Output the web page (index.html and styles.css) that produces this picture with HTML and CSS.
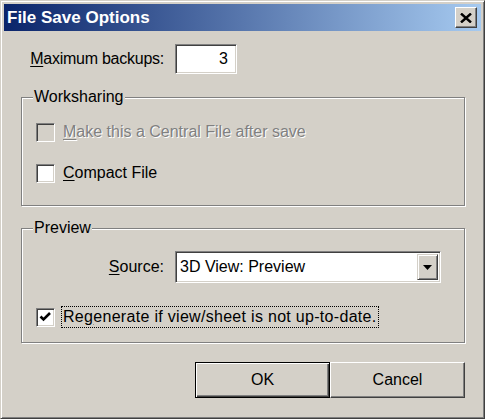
FILE: index.html
```html
<!DOCTYPE html>
<html lang="en">
<head>
  <meta charset="UTF-8">
  <title>File Save Options</title>
  <link rel="stylesheet" href="styles.css">
</head>
<body>

  <div class="window">
    <div class="titlebar">
      <span class="title">File Save Options</span>
      <button class="close" aria-label="Close">
        <svg width="12" height="10" viewBox="0 0 12 10">
          <path d="M1 0.5 L11 9.5 M11 0.5 L1 9.5" stroke="#000" stroke-width="2.4" fill="none"/>
        </svg>
      </button>
    </div>

    <div class="content">
      <div class="row">
        <label class="caption wide"><u>M</u>aximum backups:</label>
        <div class="field num">3</div>
      </div>

      <fieldset class="group work">
        <legend>Worksharing</legend>
        <div class="check disabled">
          <span class="box"></span>
          <span class="text"><u>M</u>ake this a Central File after save</span>
        </div>
        <div class="check">
          <span class="box"></span>
          <span class="text"><u>C</u>ompact File</span>
        </div>
      </fieldset>

      <fieldset class="group preview">
        <legend>Preview</legend>
        <div class="row">
          <label class="caption narrow"><u>S</u>ource:</label>
          <div class="combo">
            <span class="value">3D View: Preview</span>
            <span class="drop">
              <svg width="9" height="5" viewBox="0 0 9 5"><path d="M0 0 H9 L4.5 5 Z" fill="#000"/></svg>
            </span>
          </div>
        </div>
        <div class="check regen">
          <span class="box">
            <svg width="15" height="15" viewBox="0 0 15 15">
              <path d="M2.5 6.5 L5.5 9.5 L12 3" stroke="#000" stroke-width="2.6" fill="none"/>
            </svg>
          </span>
          <span class="text focus">Re<u>g</u>enerate if view/sheet is not up-to-date.</span>
        </div>
      </fieldset>

      <div class="actions">
        <button class="btn default">OK</button>
        <button class="btn">Cancel</button>
      </div>
    </div>
  </div>

</body>
</html>
```

FILE: styles.css
```css
/* Basic Reset */
* {
  margin: 0;
  padding: 0;
  box-sizing: border-box;
}

body {
  font-family: 'Liberation Sans', Arial, sans-serif;
  font-size: 16px;
  line-height: 18px;
  color: #000;
  background: #d4d0c8;
}

u {
  text-decoration: underline;
  text-underline-offset: 2px;
}

/* window frame */
.window {
  width: 485px;
  height: 419px;
  background: #d4d0c8;
  border: 1px solid;
  border-color: #d4d0c8 #404040 #404040 #d4d0c8;
  box-shadow: inset 1px 1px #fff, inset -1px -1px #808080;
  padding: 3px;
}

.titlebar {
  height: 27px;
  display: flex;
  align-items: center;
  justify-content: space-between;
  padding: 0 4px 0 3px;
  background: linear-gradient(to right, #0a246a, #a6caf0);
}

.title {
  color: #fff;
  font-weight: bold;
  font-size: 17px;
}

.close {
  width: 22px;
  height: 21px;
  display: flex;
  align-items: center;
  justify-content: center;
  background: #d4d0c8;
  border: 1px solid;
  border-color: #fff #404040 #404040 #fff;
  box-shadow: inset -1px -1px #808080;
}

/* dialog body */
.content {
  padding: 13px 16px 0 17px;
}

.row {
  display: flex;
  align-items: center;
}

.caption {
  text-align: right;
  padding-right: 11px;
}

.caption.wide {
  width: 154px;
  letter-spacing: -0.25px;
}

.caption.narrow {
  width: 139px;
}

.field {
  width: 62px;
  height: 30px;
  background: #fff;
  border: 1px solid;
  border-color: #808080 #fff #fff #808080;
  box-shadow: inset 1px 1px #404040, inset -1px -1px #d4d0c8;
  display: flex;
  align-items: center;
}

.num {
  justify-content: flex-end;
  padding-right: 8px;
}

/* etched group boxes */
.group {
  border: 1px solid #808080;
  box-shadow: 1px 1px #fff, inset 1px 1px #fff;
  padding: 0 14px;
}

.group legend {
  line-height: 16px;
  padding: 0 1px;
  margin-left: -3px;
  background: #d4d0c8;
}

.work {
  margin-top: 15px;
  padding-top: 17px;
  padding-bottom: 22px;
  display: flex;
  flex-direction: column;
  gap: 21px;
}

.preview {
  margin-top: 14px;
  padding-top: 15px;
  padding-bottom: 15px;
}

/* check boxes */
.check {
  display: flex;
  align-items: center;
  height: 20px;
}

.box {
  width: 19px;
  height: 19px;
  background: #fff;
  border: 1px solid;
  border-color: #808080 #fff #fff #808080;
  box-shadow: inset 1px 1px #404040, inset -1px -1px #d4d0c8;
  display: flex;
  align-items: center;
  justify-content: center;
  margin-right: 6px;
}

.text {
  padding: 1px 1px;
  border: 1px solid transparent;
}

.check.disabled .box {
  background: #d4d0c8;
}

.check.disabled .text {
  color: #808080;
  text-shadow: 1px 1px #fff;
}

.text.focus {
  border: 1px dotted #000;
  letter-spacing: 0.3px;
}

.regen {
  margin-top: 24px;
}

/* drop-down list */
.combo {
  width: 266px;
  height: 32px;
  background: #fff;
  border: 1px solid;
  border-color: #808080 #fff #fff #808080;
  box-shadow: inset 1px 1px #404040, inset -1px -1px #d4d0c8;
  display: flex;
  align-items: center;
  justify-content: space-between;
  padding: 2px 2px 2px 4px;
}

.drop {
  width: 21px;
  height: 26px;
  background: #d4d0c8;
  border: 1px solid;
  border-color: #d4d0c8 #404040 #404040 #d4d0c8;
  box-shadow: inset 1px 1px #fff, inset -1px -1px #808080;
  display: flex;
  align-items: center;
  justify-content: center;
}

/* push buttons */
.actions {
  display: flex;
  justify-content: flex-end;
  margin-top: 19px;
}

.btn {
  width: 135px;
  height: 36px;
  font-family: inherit;
  font-size: 16px;
  background: #d4d0c8;
  border: 1px solid;
  border-color: #fff #404040 #404040 #fff;
  box-shadow: inset -1px -1px #808080;
}

.btn.default {
  border-color: #000;
  box-shadow: inset 1px 1px #fff, inset -1px -1px #404040, inset -2px -2px #808080;
}
```
